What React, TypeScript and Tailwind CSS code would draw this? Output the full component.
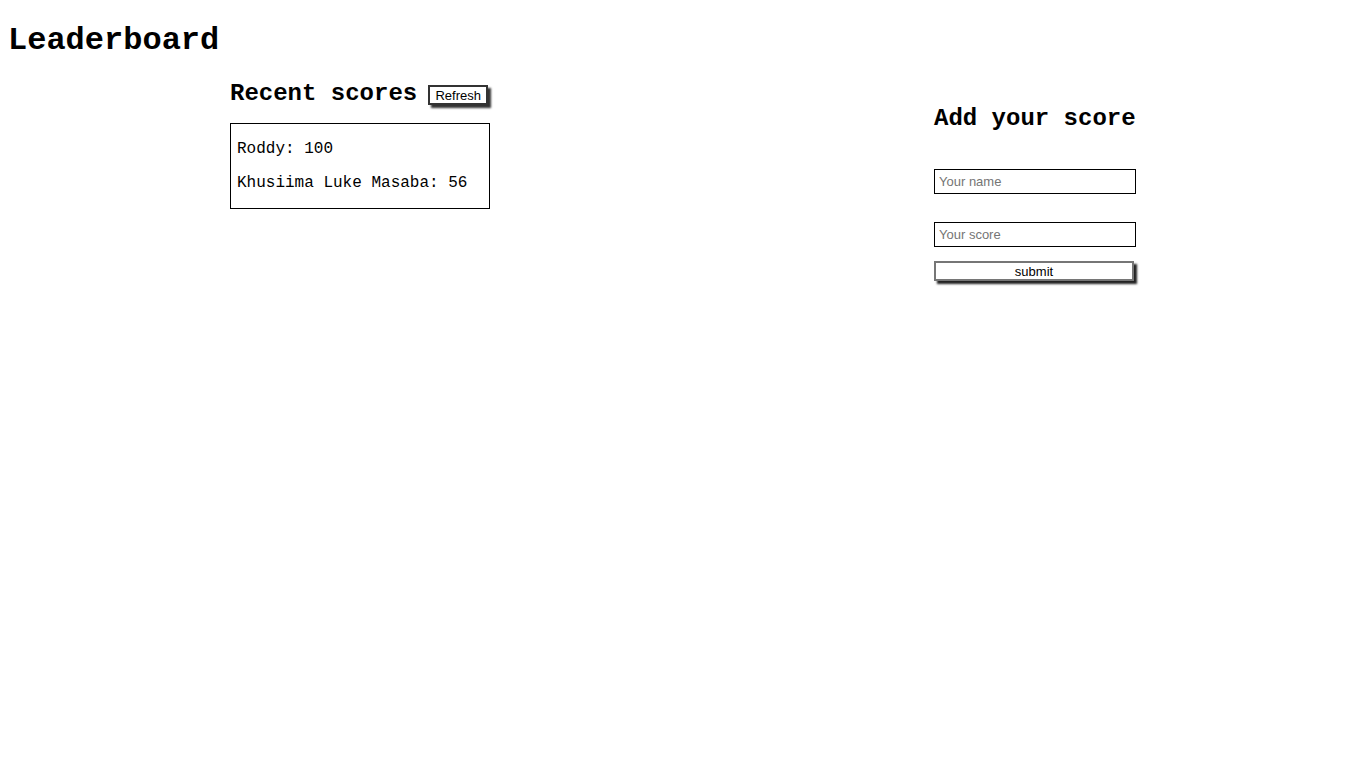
import { useState } from "react";

const scores = [
  { user: "Roddy", score: 100 },
  { user: "Khusiima Luke Masaba", score: 56 },
];

function App() {
  const [name, setName] = useState("");
  const [score, setScore] = useState("");

  return (
    <div className="min-h-screen bg-white px-2 text-black font-['Liberation_Mono',monospace]">
      <h1 className="pt-[23px] pb-[21px] text-[32px] leading-[36px] font-bold">Leaderboard</h1>

      <div className="flex items-start justify-around">
        <div className="w-[260px]">
          <div className="flex items-start">
            <h2 className="text-[24px] leading-[28px] font-bold">Recent scores</h2>
            <button
              type="button"
              className="ml-[11px] mt-[5px] h-[20px] w-[60px] border-2 border-[#333] bg-white text-[13px] leading-none font-['Liberation_Sans',sans-serif] shadow-[3px_3px_2px_#333]"
            >
              Refresh
            </button>
          </div>
          <ul className="mt-[15px] border border-black px-[6px] text-[16px] leading-[18px]">
            {scores.map((s) => (
              <li key={s.user} className="my-4">
                {s.user}: {s.score}
              </li>
            ))}
          </ul>
        </div>

        <form className="w-[202px] pt-[25px]" onSubmit={(e) => e.preventDefault()}>
          <h2 className="text-[24px] leading-[28px] font-bold">Add your score</h2>
          <input
            className="mt-[36px] block h-[25px] w-full border border-black px-[4px] text-[13px] font-['Liberation_Sans',sans-serif] placeholder:text-[#757575] outline-none"
            placeholder="Your name"
            value={name}
            onChange={(e) => setName(e.target.value)}
          />
          <input
            className="mt-[28px] block h-[25px] w-full border border-black px-[4px] text-[13px] font-['Liberation_Sans',sans-serif] placeholder:text-[#757575] outline-none"
            placeholder="Your score"
            value={score}
            onChange={(e) => setScore(e.target.value)}
          />
          <button
            type="submit"
            className="mt-[14px] block h-[20px] w-[200px] border-2 border-[#767676] bg-white text-[13px] leading-none font-['Liberation_Sans',sans-serif] shadow-[3px_3px_2px_#222]"
          >
            submit
          </button>
        </form>
      </div>
    </div>
  );
}

export default App;
